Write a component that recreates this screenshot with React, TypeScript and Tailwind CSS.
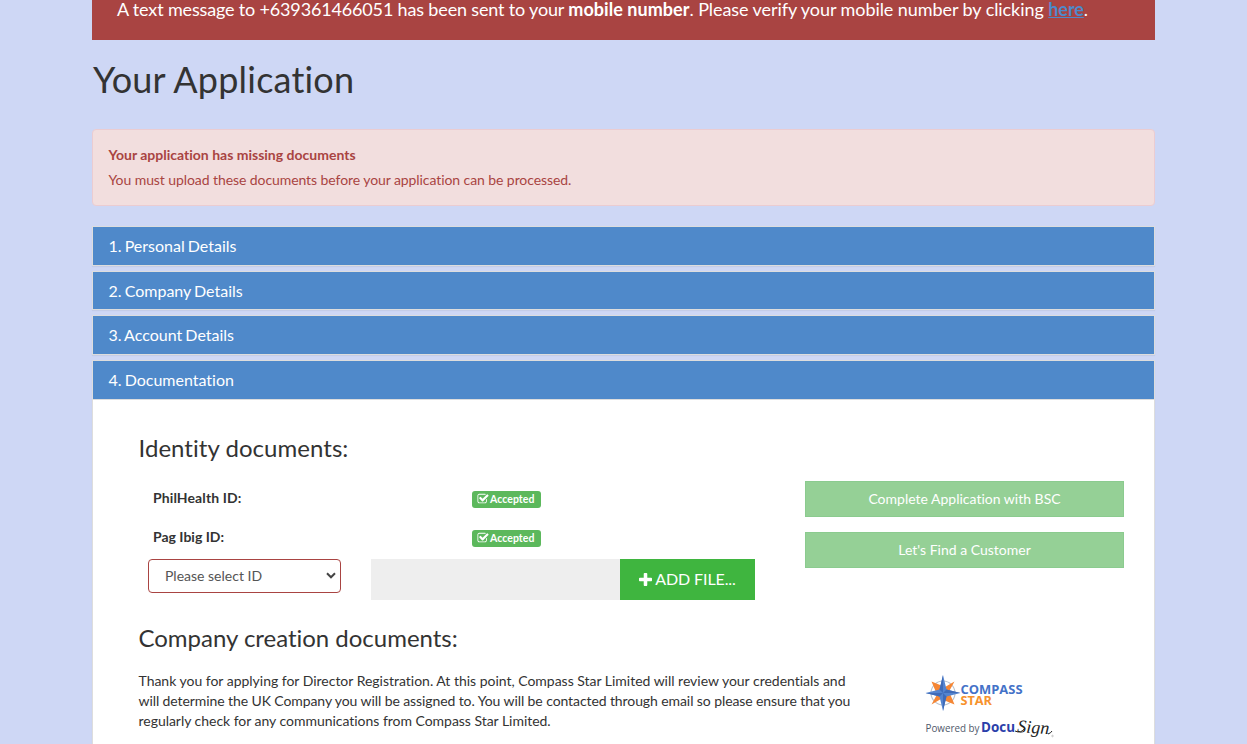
import React from "react";

const CheckSquare = () => (
  <svg viewBox="0 0 1792 1792" className="h-[12px] w-[12px] shrink-0" fill="currentColor">
    <path d="M1472 930v318q0 119-84.5 203.5t-203.5 84.5h-832q-119 0-203.5-84.5t-84.5-203.5v-832q0-119 84.5-203.5t203.5-84.5h832q63 0 117 25 15 7 18 23 3 17-9 29l-49 49q-10 10-23 10-3 0-9-2-23-6-45-6h-832q-66 0-113 47t-47 113v832q0 66 47 113t113 47h832q66 0 113-47t47-113v-254q0-13 9-22l64-64q10-10 23-10 6 0 12 3 20 8 20 29zm231-489l-814 814q-24 24-57 24t-57-24l-430-430q-24-24-24-57t24-57l110-110q24-24 57-24t57 24l263 263 647-647q24-24 57-24t57 24l110 110q24 24 24 57t-24 57z" />
  </svg>
);

const Plus = () => (
  <svg viewBox="192 128 1408 1408" className="h-[13px] w-[13px] shrink-0" fill="currentColor">
    <path d="M1600 736v192q0 40-28 68t-68 28h-416v416q0 40-28 68t-68 28h-192q-40 0-68-28t-28-68v-416h-416q-40 0-68-28t-28-68v-192q0-40 28-68t68-28h416v-416q0-40 28-68t68-28h192q40 0 68 28t28 68v416h416q40 0 68 28t28 68z" />
  </svg>
);

const Compass = () => (
  <g transform="translate(0.5 0)">
    <circle cx="17.500" cy="18" r="12" fill="none" stroke="#b9c2ce" strokeWidth="1.1" />
    <path d="M6 6.500L19.500 12L29 6.500L23.500 16.500L29 29.500L15.500 24L6 29.500L11.500 19.500Z" fill="#f58634" />
    <path d="M17.500 0L21 14.500L35 18L21 21.500L17.500 36L14 21.500L0 18L14 14.500Z" fill="#5484cf" />
    <path d="M17.500 0V18L14 14.500ZM35 18H17.500L21 14.500ZM17.500 36V18L21 21.500ZM0 18H17.500L14 21.500Z" fill="#3f6bb8" />
  </g>
);

const Accepted = () => (
  <span className="flex h-[17px] w-[69px] items-center rounded-[3px] bg-[#5cb85c] pl-[5px] text-[10.5px] leading-none font-bold whitespace-nowrap text-white">
    <CheckSquare />
    <span className="pb-px pl-px tracking-[0.05px]">Accepted</span>
  </span>
);

const Panel = ({ title, children }: { title: string; children?: React.ReactNode }) => (
  <section className="border border-[#ddd] bg-white shadow-[0_1px_1px_rgba(0,0,0,0.05)]">
    <h4 className="bg-[#4f89ca] px-[15.500px] py-[10px] text-[16px] leading-[17.6px] text-white [word-spacing:-1px]">{title}</h4>
    {children}
  </section>
);

const Documents = () => (
  <div className="h-[400px] bg-[#4f89ca] pt-[0.6px]">
    <div className="flex h-full border-t border-[#ddd] bg-white pl-[45px]">
      <div className="w-[667px] shrink-0 pt-[35px]">
        <h3 className="pl-[0.5px] text-[24px] leading-[26px] tracking-[0.04px]">Identity documents:</h3>
        <div className="mt-[27px] flex h-[20px] items-center pl-[15px] text-[14px] font-bold">
          <span className="w-[319px] tracking-[0.1px]">PhilHealth ID:</span>
          <span className="pt-[3px]"><Accepted /></span>
        </div>
        <div className="mt-[19px] flex h-[20px] items-center pl-[15px] text-[14px] font-bold">
          <span className="w-[319px]">Pag Ibig ID:</span>
          <span className="pt-[3px]"><Accepted /></span>
        </div>
        <div className="mt-[12px] flex items-start pl-[10px]">
          <div className="flex h-[34px] w-[193px] items-center justify-between rounded-[4px] border border-[#a94442] pr-[4px] pl-[16px] text-[14px] text-[#555]">
            <span>Please select ID</span>
            <svg viewBox="0 0 10 7" className="h-[7px] w-[10px]">
              <path d="M1 1.3L5 5.3L9 1.3" fill="none" stroke="#444" strokeWidth="2" />
            </svg>
          </div>
          <div className="ml-[30px] h-[41px] w-[249px] bg-[#eee]" />
          <button className="flex h-[41px] w-[135px] items-center justify-center gap-[3px] bg-[#3fb53f] text-[16px] tracking-[-0.1px] text-white">
            <Plus />
            <span>ADD FILE...</span>
          </button>
        </div>
        <h3 className="mt-[25px] pl-[0.5px] text-[24px] leading-[26px] tracking-[-0.02px] whitespace-nowrap">Company creation documents:</h3>
        <p className="mt-[20px] w-[730px] pl-[0.5px] text-[14px] leading-[20px] whitespace-nowrap">
          <span className="tracking-[-0.015px]">Thank you for applying for Director Registration. At this point, Compass Star Limited will review your credentials and</span>
          <br />
          <span className="tracking-[-0.09px]">will determine the UK Company you will be assigned to. You will be contacted through email so please ensure that you</span>
          <br />
          <span className="tracking-[-0.03px]">regularly check for any communications from Compass Star Limited.</span>
        </p>
      </div>
      <div className="w-[319px] shrink-0 pt-[81px]">
        <div className="flex flex-col gap-[15px] text-[14px] text-white">
          <button className="h-[36px] border border-[#8bcb8f] bg-[#95d096]">Complete Application with BSC</button>
          <button className="h-[36px] border border-[#8bcb8f] bg-[#95d096]">Let's Find a Customer</button>
        </div>
        <svg viewBox="0 0 110 36" className="mt-[107px] ml-[120px] h-[36px] w-[110px]">
          <Compass />
          <text x="35.5" y="19" fontSize="12" fontWeight="700" fill="#4472c8" textLength="62" lengthAdjust="spacingAndGlyphs" className="font-['Open_Sans',sans-serif]">COMPASS</text>
          <text x="35.5" y="30" fontSize="12" fontWeight="700" fill="#f7922d" textLength="31.5" lengthAdjust="spacingAndGlyphs" className="font-['Open_Sans',sans-serif]">STAR</text>
        </svg>
        <svg viewBox="0 0 134 30" className="ml-[119px] h-[30px] w-[134px]">
          <text x="1.5" y="21" fontSize="10" fill="#50596b" textLength="54" lengthAdjust="spacingAndGlyphs" className="font-['Open_Sans',sans-serif]">Powered by</text>
          <text x="57" y="21" fontSize="14" fontWeight="700" fill="#2b3faa" textLength="34" lengthAdjust="spacingAndGlyphs" className="font-['Open_Sans',sans-serif]">Docu</text>
          <text x="93" y="21" fontSize="18" fontStyle="italic" fill="#222" textLength="32" className="font-['Liberation_Serif',serif]" transform="rotate(4 93 21)">Sign</text>
          <path d="M91 20Q97 23 101 17M124 23Q127 22 128 20" fill="none" stroke="#222" />
          <circle cx="128.500" cy="25" r="0.8" fill="none" stroke="#999" strokeWidth="0.5" />
        </svg>
      </div>
    </div>
  </div>
);

export default function App() {
  return (
    <div className="h-[744px] overflow-hidden bg-[#ced7f5] font-['Lato','Liberation_Sans',sans-serif] text-[14px] leading-[20px] text-[#333] [font-variant-ligatures:none]">
      <main className="mx-auto w-[1063px]">
        <div className="h-[40px] bg-[#a94442] pl-[25px] text-[18px] leading-[18px] tracking-[-0.07px] whitespace-nowrap text-white">
          <span className="tracking-[-0.16px]">A text message to +639361466051 has been sent to your </span>
          <b className="tracking-[0.04px]">mobile number</b>. Please verify your mobile number by clicking{" "}
          <a className="font-bold text-[#4f89ca] underline">here</a>.
        </div>
        <h1 className="pt-[19px] pb-px pl-px text-[36px] leading-[40px] tracking-[0.2px]">Your Application</h1>
        <div className="mt-[29px] h-[77px] rounded-[4px] border border-[#ebccd1] bg-[#f2dede] px-[15.500px] py-[15px] text-[#a94442]">
          <p className="font-bold">Your application has missing documents</p>
          <p className="mt-[5px] tracking-[-0.08px]">You must upload these documents before your application can be processed.</p>
        </div>
        <div className="mt-[20px] flex flex-col gap-[5px]">
          <Panel title="1. Personal Details" />
          <Panel title="2. Company Details" />
          <Panel title="3. Account Details" />
          <Panel title="4. Documentation">
            <Documents />
          </Panel>
        </div>
      </main>
    </div>
  );
}
